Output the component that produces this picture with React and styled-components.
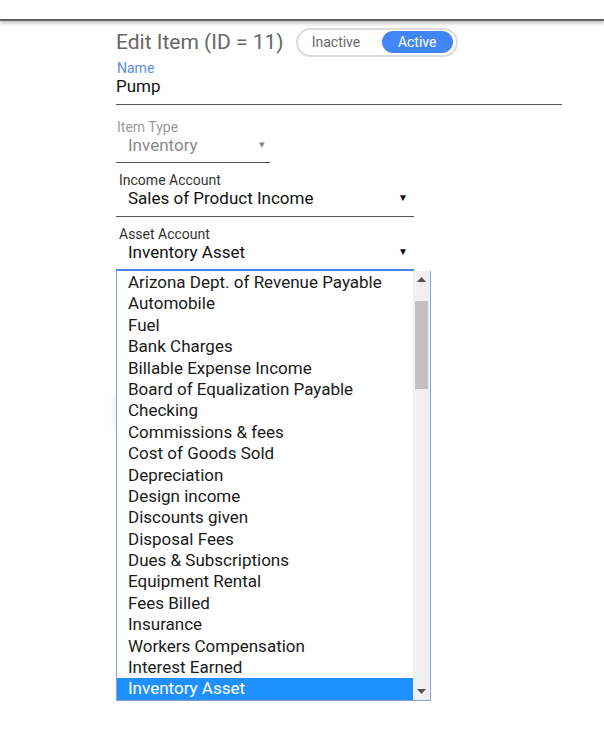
import React from "react";
import styled, { createGlobalStyle } from "styled-components";

const Global = createGlobalStyle`
  html, body { margin: 0; padding: 0; background: #fff; }
  body { font-family: Roboto, "Liberation Sans", Arial, sans-serif; }
  * { box-sizing: border-box; }
`;

const Page = styled.div`
  width: 604px;
  height: 737px;
  overflow: hidden;
  position: relative;
`;

const TopBar = styled.div`
  height: 21px;
  border-bottom: 2px solid #626262;
  box-shadow: 0 2px 4px rgba(0, 0, 0, 0.28);
`;

const Form = styled.div`
  position: relative;
  margin-left: 116px;
  width: 446px;
  padding-top: 7px;
`;

const Header = styled.div`
  display: flex;
  align-items: center;
  gap: 12px;
  height: 28px;
`;

const Title = styled.h1`
  margin: 0;
  font-weight: 400;
  font-size: 21px;
  line-height: 28px;
  color: #666;
`;

const Toggle = styled.div`
  display: flex;
  align-items: center;
  justify-content: space-between;
  width: 162px;
  height: 29px;
  border: 2px solid #dcdcdc;
  border-radius: 15px;
  padding: 0 3px 0 14px;
`;

const ToggleOption = styled.span`
  display: flex;
  align-items: center;
  justify-content: center;
  height: 22px;
  border-radius: 11px;
  font-size: 14px;
  width: ${(p) => (p.$active ? "71px" : "auto")};
  color: ${(p) => (p.$active ? "#fff" : "#6b6b6b")};
  background: ${(p) => (p.$active ? "#4285f4" : "transparent")};
`;

const Field = styled.div`
  position: relative;
  width: ${(p) => p.$width || "100%"};
  margin-top: ${(p) => p.$mt || 0}px;
  padding-bottom: ${(p) => p.$pb || 8}px;
  border-bottom: ${(p) => (p.$focused ? "2px solid #4a86e8" : "1px solid #555")};
  z-index: ${(p) => (p.$focused ? 2 : "auto")};
`;

const Label = styled.div`
  font-size: 14px;
  line-height: 16px;
  padding-left: ${(p) => p.$indent || 1}px;
  color: ${(p) => p.$color || "#333"};
`;

const ValueRow = styled.div`
  display: flex;
  align-items: center;
  justify-content: space-between;
  font-size: 17px;
  line-height: 20px;
  padding-left: ${(p) => p.$indent || 0}px;
  padding-right: ${(p) => p.$pr || 6}px;
  color: ${(p) => p.$color || "#111"};
`;

const Arrow = styled.span`
  font-size: ${(p) => p.$size || 10}px;
  color: ${(p) => p.$color || "#111"};
`;

const Behind = styled.div`
  position: absolute;
  left: 0;
  top: 372px;
  width: 120px;
  height: 38px;
  border-radius: 3px;
  background: #fff;
  box-shadow: 0 1px 8px rgba(0, 0, 0, 0.1);
`;

const ListBox = styled.div`
  position: absolute;
  left: 0;
  top: calc(100% + 2px);
  width: 315px;
  height: 430px;
  display: flex;
  background: #fff;
  border: 1px solid #8aa3c6;
  border-top: none;
`;

const Options = styled.ul`
  flex: 1;
  margin: 0;
  padding: 1px 0 0;
  list-style: none;
  overflow: hidden;
`;

const Option = styled.li`
  height: 21.4px;
  line-height: 21.4px;
  font-size: 17px;
  padding-left: 11px;
  white-space: nowrap;
  color: ${(p) => (p.$selected ? "#fff" : "#1a1a1a")};
  background: ${(p) => (p.$selected ? "#1e90ff" : "transparent")};
`;

const ScrollBar = styled.div`
  width: 17px;
  display: flex;
  flex-direction: column;
  background: #f0eff2;
`;

const ScrollButton = styled.div`
  height: 17px;
  display: flex;
  align-items: center;
  justify-content: center;
`;

const Track = styled.div`
  flex: 1;
  padding: 13px 2px 0;
`;

const Thumb = styled.div`
  height: 88px;
  background: #c1c1c1;
`;

const items = [
  "Arizona Dept. of Revenue Payable",
  "Automobile",
  "Fuel",
  "Bank Charges",
  "Billable Expense Income",
  "Board of Equalization Payable",
  "Checking",
  "Commissions & fees",
  "Cost of Goods Sold",
  "Depreciation",
  "Design income",
  "Discounts given",
  "Disposal Fees",
  "Dues & Subscriptions",
  "Equipment Rental",
  "Fees Billed",
  "Insurance",
  "Workers Compensation",
  "Interest Earned",
  "Inventory Asset",
];

const Tri = ({ down }) => (
  <svg width="9" height="5" viewBox="0 0 9 5">
    <polygon points={down ? "0,0 9,0 4.5,5" : "0,5 9,5 4.5,0"} fill="#505050" />
  </svg>
);

export default function App() {
  return (
    <Page>
      <Global />
      <TopBar />
      <Form>
        <Header>
          <Title>Edit Item (ID = 11)</Title>
          <Toggle>
            <ToggleOption>Inactive</ToggleOption>
            <ToggleOption $active>Active</ToggleOption>
          </Toggle>
        </Header>

        <Field $mt={4}>
          <Label $color="#5a8ee6">Name</Label>
          <ValueRow>Pump</ValueRow>
        </Field>

        <Field $mt={14} $width="154px" $pb={7}>
          <Label $color="#9a9a9a">Item Type</Label>
          <ValueRow $indent={12} $pr={5} $color="#8a8a8a">
            Inventory
            <Arrow $color="#8a8a8a" $size={11}>▾</Arrow>
          </ValueRow>
        </Field>

        <Field $mt={9} $width="298px">
          <Label $indent={3}>Income Account</Label>
          <ValueRow $indent={12} $pr={6}>
            Sales of Product Income
            <Arrow>▼</Arrow>
          </ValueRow>
        </Field>

        <Field $mt={9} $width="298px" $pb={7} $focused>
          <Label $indent={3}>Asset Account</Label>
          <ValueRow $indent={12} $pr={6}>
            Inventory Asset
            <Arrow>▼</Arrow>
          </ValueRow>
          <ListBox>
            <Options>
              {items.map((it, i) => (
                <Option key={it} $selected={i === items.length - 1}>
                  {it}
                </Option>
              ))}
            </Options>
            <ScrollBar>
              <ScrollButton>
                <Tri />
              </ScrollButton>
              <Track>
                <Thumb />
              </Track>
              <ScrollButton>
                <Tri down />
              </ScrollButton>
            </ScrollBar>
          </ListBox>
        </Field>

        <Behind />
      </Form>
    </Page>
  );
}
